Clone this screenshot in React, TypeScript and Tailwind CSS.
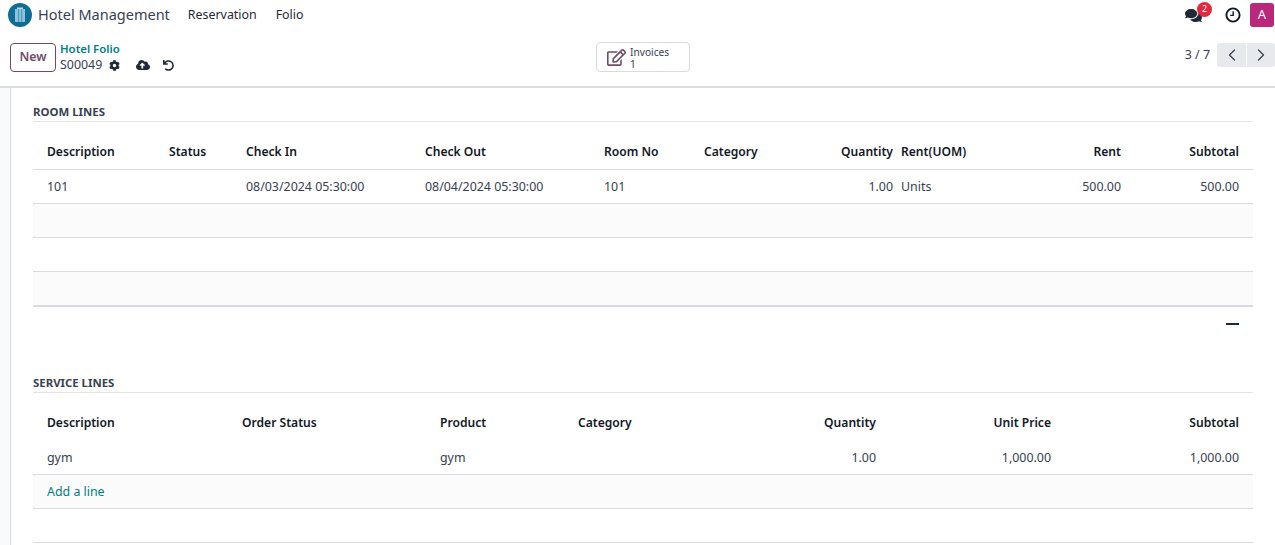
import React from 'react'
import { FaCog, FaCloudUploadAlt, FaUndo, FaComments, FaRegEdit } from 'react-icons/fa'
import { ChevronLeft, ChevronRight } from 'lucide-react'

type Col = { label: string; w: string; cell: string; right?: boolean }

const roomCols: Col[] = [
    { label: 'Description', w: 'w-[132px]', cell: '101' },
    { label: 'Status', w: 'w-[77px]', cell: '' },
    { label: 'Check In', w: 'w-[179px]', cell: '08/03/2024 05:30:00' },
    { label: 'Check Out', w: 'w-[179px]', cell: '08/04/2024 05:30:00' },
    { label: 'Room No', w: 'w-[100px]', cell: '101' },
    { label: 'Category', w: 'w-[100px]', cell: '' },
    { label: 'Quantity', w: 'w-[97px]', cell: '1.00', right: true },
    { label: 'Rent(UOM)', w: 'w-[114px]', cell: 'Units' },
    { label: 'Rent', w: 'w-[114px]', cell: '500.00', right: true },
    { label: 'Subtotal', w: 'w-[128px]', cell: '500.00', right: true },
]

const serviceCols: Col[] = [
    { label: 'Description', w: 'w-[205px]', cell: 'gym' },
    { label: 'Order Status', w: 'w-[198px]', cell: '' },
    { label: 'Product', w: 'w-[138px]', cell: 'gym' },
    { label: 'Category', w: 'w-[156px]', cell: '' },
    { label: 'Quantity', w: 'w-[150px]', cell: '1.00', right: true },
    { label: 'Unit Price', w: 'w-[175px]', cell: '1,000.00', right: true },
    { label: 'Subtotal', w: 'w-[198px]', cell: '1,000.00', right: true },
]

const Row = ({ cols, head }: { cols: Col[]; head?: boolean }) => (
    <div className="flex w-full">
        {cols.map((c, i) => (
            <div
                key={c.label}
                className={`${c.w} shrink-0 ${c.right ? 'text-right' : ''} ${i === 0 ? 'pl-[14px]' : 'pl-[4px]'} ${i === cols.length - 1 ? 'pr-[14px]' : 'pr-[4px]'} ${head ? 'font-semibold text-[12.1px] text-[#111827]' : 'text-[#374151]'}`}
            >
                {head ? c.label : c.cell}
            </div>
        ))}
    </div>
)

const Filler = ({ className = '' }: { className?: string }) => (
    <div className={`h-[34px] border-b border-[#d8dadd] ${className}`} />
)

const Logo = () => (
    <svg viewBox="0 0 24 24" className="w-[24px] h-[24px]">
        <circle cx="12" cy="12" r="12" fill="#0f6d94" />
        <rect x="7" y="6" width="10" height="13" fill="#8cc2da" />
        <rect x="9" y="4.5" width="6" height="1.8" fill="#b9dcec" />
        <rect x="10" y="6" width="1.2" height="13" fill="#4f9abd" />
        <rect x="13" y="6" width="1.2" height="13" fill="#4f9abd" />
    </svg>
)

const Clock = () => (
    <svg viewBox="0 0 16 16" className="w-[16px] h-[16px] mr-[9px]" fill="none" stroke="#111827">
        <circle cx="8" cy="8" r="6.6" strokeWidth="1.9" />
        <path d="M8.2 4.2V8.4H5.2" strokeWidth="1.4" />
    </svg>
)

const App = () => {
    return (
        <div className="w-[1275px] h-[545px] overflow-hidden bg-white text-[12.4px] text-[#374151] font-['Noto_Sans',sans-serif]">
            <header className="h-[30px] flex items-center pl-[8px] pr-[1px]">
                <Logo />
                <span className="ml-[6px] text-[14.5px] text-[#374151]">Hotel Management</span>
                <nav className="flex gap-[19px] ml-[18px] text-[#1f2937]">
                    <span>Reservation</span>
                    <span>Folio</span>
                </nav>
                <div className="ml-auto flex items-center">
                    <div className="relative mr-[23px]">
                        <FaComments className="w-[17px] h-[17px] text-[#1f2937]" />
                        <span className="absolute -top-[5px] left-[12px] w-[15px] h-[15px] rounded-full bg-[#e4283f] text-white text-[9px] flex items-center justify-center">2</span>
                    </div>
                    <Clock />
                    <div className="w-[24px] h-[24px] rounded-[3px] bg-[#b9287a] text-white text-[13px] flex items-center justify-center">A</div>
                </div>
            </header>
            <div className="h-[58px] border-b-2 border-[#dcdddf] flex items-center pl-[10px] relative">
                <button type="button" className="w-[46px] h-[29px] -mt-[2px] border border-[#714b67] rounded-[4px] text-[#714b67] font-semibold">New</button>
                <div className="ml-[4px] -mt-[2px] leading-[16px]">
                    <div className="text-[#017e84] font-semibold text-[11.4px]">Hotel Folio</div>
                    <div className="flex items-center text-[#374151]">
                        <span>S00049</span>
                        <FaCog className="w-[11px] h-[11px] ml-[7px] text-[#1f2937]" />
                        <FaCloudUploadAlt className="w-[14px] h-[14px] ml-[16px] text-[#1f2937]" />
                        <FaUndo className="w-[11px] h-[11px] ml-[13px] text-[#1f2937]" />
                    </div>
                </div>
                <button type="button" className="absolute left-[596px] top-[12px] w-[94px] h-[30px] border border-[#d8dadd] rounded-[4px] flex items-center pl-[10px] pt-[1px] text-[10.2px] leading-[12px] text-[#374151]">
                    <FaRegEdit className="w-[19px] h-[19px] text-[#714b67]" />
                    <span className="ml-[4px] text-left">Invoices<br />1</span>
                </button>
                <div className="ml-auto flex items-center -mt-[6px]">
                    <span className="mr-[7px] text-[#374151]">3 / 7</span>
                    <div className="flex gap-[1px]">
                        <div className="w-[29px] h-[24px] bg-[#e7e9ed] rounded-l-[3px] flex items-center justify-center">
                            <ChevronLeft className="w-[20px] h-[20px] text-[#374151]" strokeWidth={1.5} />
                        </div>
                        <div className="w-[28px] h-[24px] bg-[#e7e9ed] rounded-r-[3px] flex items-center justify-center">
                            <ChevronRight className="w-[20px] h-[20px] text-[#374151]" strokeWidth={1.5} />
                        </div>
                    </div>
                </div>
            </div>
            <div className="flex h-[457px]">
                <div className="w-[11px] shrink-0 bg-[#f9fafb] border-r border-[#d8dadd]" />
                <main className="w-[1220px] ml-[22px]">
                    <h2 className="mt-[15px] h-[19px] leading-[18px] border-b border-[#e3e4e6] text-[11.4px] font-bold text-[#374151]">ROOM LINES</h2>
                    <div className="h-[48px] pt-[21px] border-b border-[#d8dadd] leading-[18px]">
                        <Row cols={roomCols} head />
                    </div>
                    <div className="h-[34px] pt-[2px] border-b border-[#d8dadd] flex items-center">
                        <Row cols={roomCols} />
                    </div>
                    <Filler className="bg-[#fbfbfb]" />
                    <Filler />
                    <Filler className="bg-[#fbfbfb] h-[35px] border-b-2" />
                    <div className="h-[33px] flex items-center justify-end pr-[14px]">
                        <div className="w-[13px] h-[2px] bg-[#1f2937]" />
                    </div>
                    <h2 className="mt-[34px] h-[19px] leading-[18px] border-b border-[#e3e4e6] text-[11.4px] font-bold text-[#374151]">SERVICE LINES</h2>
                    <div className="h-[47px] pt-[21px] leading-[18px]">
                        <Row cols={serviceCols} head />
                    </div>
                    <div className="h-[35px] pt-[2px] border-b border-[#d8dadd] flex items-center">
                        <Row cols={serviceCols} />
                    </div>
                    <div className="h-[34px] pt-[1px] border-b border-[#d8dadd] bg-[#fbfbfb] flex items-center pl-[14px] text-[#017e84]">Add a line</div>
                    <Filler />
                </main>
            </div>
        </div>
    )
}

export default App
